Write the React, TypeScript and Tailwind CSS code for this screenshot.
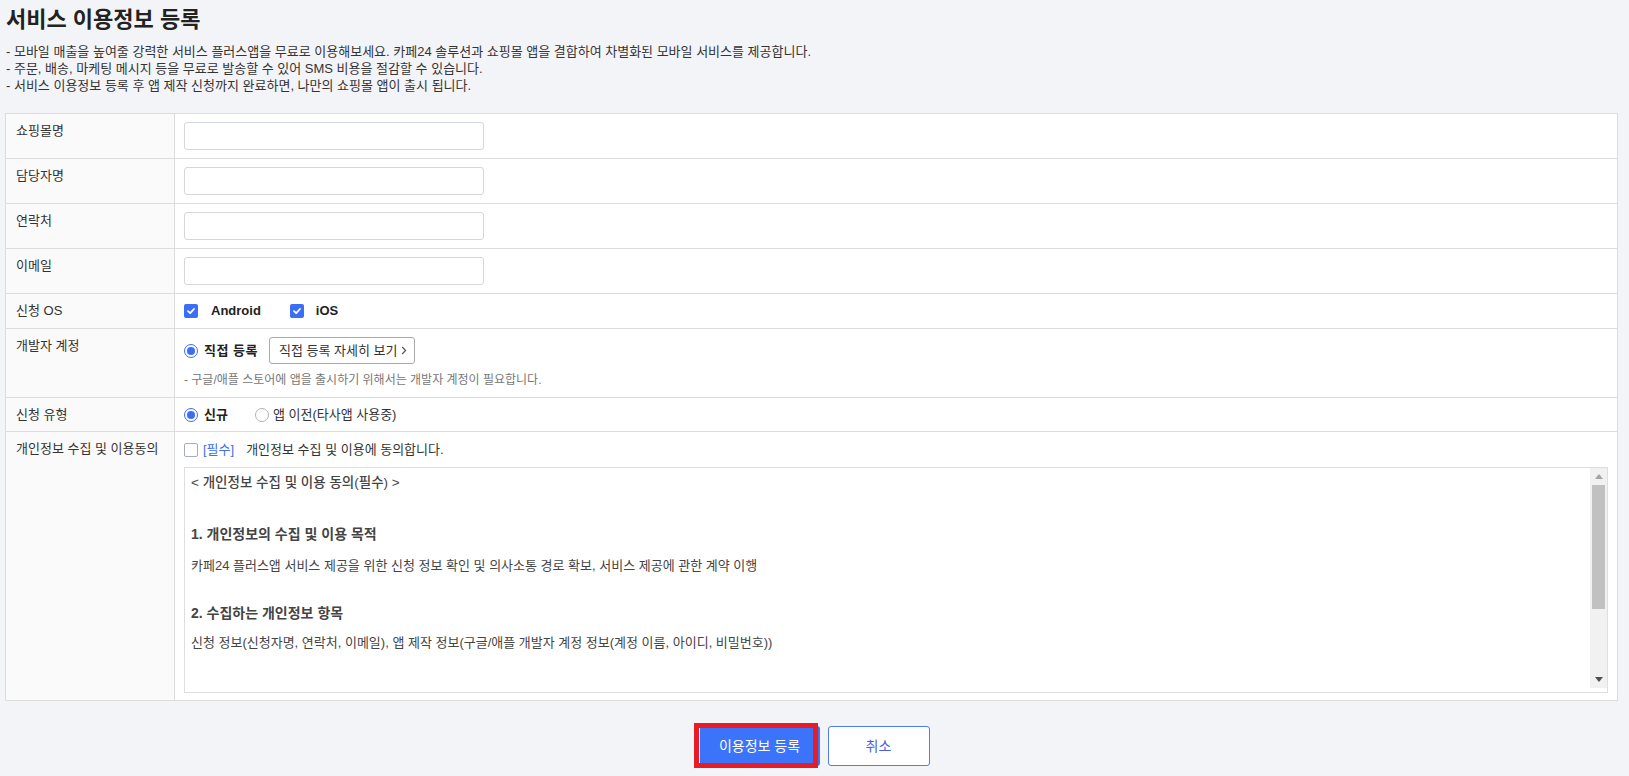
const FONT = { fontFamily: '"Liberation Sans", "Noto Sans CJK KR", sans-serif' };

function Check({ on = false }: { on?: boolean }) {
  if (!on) {
    return <span className="block w-[14px] h-[14px] rounded-[2px] border border-[#a9adb8] bg-white shrink-0" />;
  }
  return (
    <span className="w-[14px] h-[14px] rounded-[2px] bg-[#3b6ef5] flex items-center justify-center shrink-0">
      <svg width="10" height="10" viewBox="0 0 10 10" fill="none">
        <path d="M2 5.2 L4.2 7.2 L8 3" stroke="white" strokeWidth="1.8" strokeLinecap="round" strokeLinejoin="round" />
      </svg>
    </span>
  );
}

function Radio({ on = false }: { on?: boolean }) {
  return (
    <span
      className={
        on
          ? "w-[14px] h-[14px] rounded-full border border-[#3b6ef5] bg-white flex items-center justify-center shrink-0"
          : "block w-[14px] h-[14px] rounded-full border border-[#b3b3b3] bg-white shrink-0"
      }
    >
      {on && <span className="w-[8px] h-[8px] rounded-full bg-[#3b6ef5]" />}
    </span>
  );
}

function Row({ label, children, last = false }: { label: string; children: React.ReactNode; last?: boolean }) {
  return (
    <div className={last ? "flex" : "flex border-b border-[#dcdcdc]"}>
      <div className="w-[169px] shrink-0 bg-[#fafafa] border-r border-[#dcdcdc] pl-[10px] pt-2 text-[13px] leading-[18px] text-[#333]">
        {label}
      </div>
      <div className="flex-1 min-w-0 px-[9px]">{children}</div>
    </div>
  );
}

function TextInput() {
  return <div className="py-2"><div className="w-[300px] h-[28px] bg-white border border-[#d3d6dc] rounded-[3px]" /></div>;
}

export default function App() {
  return (
    <div style={FONT} className="min-h-screen bg-[#f3f4f8] pl-[5px] pr-[11px] pt-[5px] pb-[10px] text-[#333]">
      <h1 className="pl-[1px] text-[22px] leading-[30px] font-bold text-[#222]">서비스 이용정보 등록</h1>
      <div className="mt-[8px] pl-[1px] text-[13px] leading-[17px] text-[#333]">
        <p>- 모바일 매출을 높여줄 강력한 서비스 플러스앱을 무료로 이용해보세요. 카페24 솔루션과 쇼핑몰 앱을 결합하여 차별화된 모바일 서비스를 제공합니다.</p>
        <p>- 주문, 배송, 마케팅 메시지 등을 무료로 발송할 수 있어 SMS 비용을 절감할 수 있습니다.</p>
        <p>- 서비스 이용정보 등록 후 앱 제작 신청까지 완료하면, 나만의 쇼핑몰 앱이 출시 됩니다.</p>
      </div>

      <div className="mt-[19px] bg-white border border-[#dcdcdc]">
        <Row label="쇼핑몰명"><TextInput /></Row>
        <Row label="담당자명"><TextInput /></Row>
        <Row label="연락처"><TextInput /></Row>
        <Row label="이메일"><TextInput /></Row>
        <Row label="신청 OS">
          <div className="flex items-center h-[34px]">
            <Check on />
            <span className="ml-[13px] text-[13px] font-bold text-[#222]">Android</span>
            <span className="ml-[29px]"><Check on /></span>
            <span className="ml-[12px] text-[13px] font-bold text-[#222]">iOS</span>
          </div>
        </Row>
        <Row label="개발자 계정">
          <div className="pt-2 pb-2">
            <div className="flex items-center h-[27px]">
              <Radio on />
              <span className="ml-[6px] text-[13px] tracking-[0.5px] font-bold text-[#222]">직접 등록</span>
              <button className="ml-[11px] h-[27px] pl-[9px] pr-[7px] border border-[#a9a9a9] rounded-[3px] bg-white text-[13px] text-[#333] flex items-center gap-[4px]">
                직접 등록 자세히 보기
                <svg width="6" height="9" viewBox="0 0 6 9" fill="none">
                  <path d="M1.2 1 L4.6 4.5 L1.2 8" stroke="#555" strokeWidth="1.2" />
                </svg>
              </button>
            </div>
            <p className="mt-[7px] text-[12px] leading-[18px] text-[#777]">- 구글/애플 스토어에 앱을 출시하기 위해서는 개발자 계정이 필요합니다.</p>
          </div>
        </Row>
        <Row label="신청 유형">
          <div className="flex items-center h-[33px]">
            <Radio on />
            <span className="ml-[6px] text-[13px] font-bold text-[#222]">신규</span>
            <span className="ml-[27px]"><Radio /></span>
            <span className="ml-[4px] text-[13px] text-[#333]">앱 이전(타사앱 사용중)</span>
          </div>
        </Row>
        <Row label="개인정보 수집 및 이용동의" last>
          <div className="pt-[9px] pb-[7px]">
            <div className="flex items-center h-[18px] text-[13px]">
              <Check />
              <span className="ml-[5px] text-[#3b6ef5]">[필수]</span>
              <span className="ml-[12px] text-[#333]">개인정보 수집 및 이용에 동의합니다.</span>
            </div>
            <div className="mt-[8px] h-[226px] border border-[#dedede] bg-white flex overflow-hidden">
              <div className="flex-1 min-w-0 pl-[6px] pt-[5px] text-[#444]">
                <p className="text-[13.5px] leading-[20px] font-medium">&lt; 개인정보 수집 및 이용 동의(필수) &gt;</p>
                <p className="mt-[31px] text-[14px] leading-[20px] font-bold">1. 개인정보의 수집 및 이용 목적</p>
                <p className="mt-[12px] text-[13px] leading-[20px]">카페24 플러스앱 서비스 제공을 위한 신청 정보 확인 및 의사소통 경로 확보, 서비스 제공에 관한 계약 이행</p>
                <p className="mt-[27px] text-[14px] leading-[20px] font-bold">2. 수집하는 개인정보 항목</p>
                <p className="mt-[10px] text-[13px] leading-[20px]">신청 정보(신청자명, 연락처, 이메일), 앱 제작 정보(구글/애플 개발자 계정 정보(계정 이름, 아이디, 비밀번호))</p>
              </div>
              <div className="w-[17px] h-[220px] bg-[#f1f1f1] flex flex-col items-center shrink-0">
                <div className="h-[17px] flex items-center justify-center">
                  <svg width="8" height="5" viewBox="0 0 8 5"><path d="M0 5 L4 0 L8 5 Z" fill="#a3a3a3" /></svg>
                </div>
                <div className="w-[13px] h-[124px] bg-[#c1c1c1]" />
                <div className="flex-1" />
                <div className="h-[17px] flex items-center justify-center">
                  <svg width="8" height="5" viewBox="0 0 8 5"><path d="M0 0 L8 0 L4 5 Z" fill="#505050" /></svg>
                </div>
              </div>
            </div>
          </div>
        </Row>
      </div>

      <div className="mt-[25px] flex justify-center gap-[8px] pl-[6px]">
        <div className="relative">
          <button className="w-[120px] h-[40px] bg-[#3b73fa] rounded-[3px] text-white text-[14px]">이용정보 등록</button>
          <div className="absolute -left-[6px] -top-[3px] w-[124px] h-[45px] border-[5px] border-[#e81c24] pointer-events-none" />
        </div>
        <button className="w-[102px] h-[40px] bg-white border border-[#4f7cf2] rounded-[3px] text-[14px] text-[#4a5fdc]">취소</button>
      </div>
    </div>
  );
}
